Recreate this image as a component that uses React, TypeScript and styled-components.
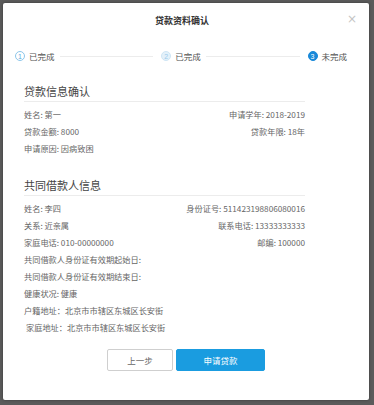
import React from "react";
import styled, { createGlobalStyle } from "styled-components";

const GlobalStyle = createGlobalStyle`
  html, body {
    margin: 0;
    padding: 0;
    background: #5b5b5b;
  }
  body {
    width: 374px;
    height: 405px;
    overflow: hidden;
    font-family: "Noto Sans CJK SC", "Liberation Sans", sans-serif;
  }
`;

type Row = { left: string; right?: string; indent?: boolean };

const loanRows: Row[] = [
  { left: "姓名: 第一", right: "申请学年: 2018-2019" },
  { left: "贷款金额: 8000", right: "贷款年限: 18年" },
  { left: "申请原因: 因病致困" },
];

const coRows: Row[] = [
  { left: "姓名: 李四", right: "身份证号: 511423198806080016" },
  { left: "关系: 近亲属", right: "联系电话: 13333333333" },
  { left: "家庭电话: 010-00000000", right: "邮编: 100000" },
  { left: "共同借款人身份证有效期起始日:" },
  { left: "共同借款人身份证有效期结束日:" },
  { left: "健康状况: 健康" },
  { left: "户籍地址：北京市市辖区东城区长安街" },
  { left: "家庭地址：北京市市辖区东城区长安街", indent: true },
];

const steps = [
  { n: 1, label: "已完成", state: "done" },
  { n: 2, label: "已完成", state: "light" },
  { n: 3, label: "未完成", state: "active" },
] as const;

const App: React.FC = () => {
  return (
    <>
      <GlobalStyle />
      <Modal>
        <Header>
          <Title>贷款资料确认</Title>
          <Close>×</Close>
        </Header>

        <Steps>
          {steps.map((s, i) => (
            <React.Fragment key={s.n}>
              <Step>
                <Dot state={s.state}>{s.n}</Dot>
                <StepLabel>{s.label}</StepLabel>
              </Step>
              {i < steps.length - 1 && <StepLine />}
            </React.Fragment>
          ))}
        </Steps>

        <Section>
          <SectionTitle>贷款信息确认</SectionTitle>
          {loanRows.map((r) => (
            <InfoRow key={r.left}>
              <span>{r.left}</span>
              {r.right && <span>{r.right}</span>}
            </InfoRow>
          ))}
        </Section>

        <Section>
          <SectionTitle>共同借款人信息</SectionTitle>
          {coRows.map((r) => (
            <InfoRow key={r.left} indent={r.indent}>
              <span>{r.left}</span>
              {r.right && <span>{r.right}</span>}
            </InfoRow>
          ))}
        </Section>

        <Footer>
          <Button>上一步</Button>
          <Button primary>申请贷款</Button>
        </Footer>
      </Modal>
    </>
  );
};

const Modal = styled.div`
  margin: 3px 0 0 3px;
  width: 366px;
  height: 397px;
  box-sizing: border-box;
  background: #fff;
  border-radius: 2px;
  box-shadow: 0 0 3px rgba(0, 0, 0, 0.4);
  display: flex;
  flex-direction: column;
`;

const Header = styled.div`
  position: relative;
  height: 34px;
  display: flex;
  align-items: center;
  justify-content: center;
`;

const Title = styled.div`
  font-size: 9px;
  font-weight: 600;
  color: #333;
  margin-right: 8px;
`;

const Close = styled.span`
  position: absolute;
  right: 12px;
  top: 9px;
  font-size: 12px;
  line-height: 14px;
  color: #c4c4c4;
  font-family: "DejaVu Sans", sans-serif;
`;

const Steps = styled.div`
  margin: 10px 22px 0 12px;
  height: 18px;
  display: flex;
  align-items: center;
`;

const Step = styled.div`
  display: flex;
  align-items: center;
  gap: 4px;
`;

const Dot = styled.span<{ state: "done" | "light" | "active" }>`
  width: 10px;
  height: 10px;
  border-radius: 50%;
  box-sizing: border-box;
  display: flex;
  align-items: center;
  justify-content: center;
  font-family: "Liberation Sans", sans-serif;
  font-size: 7px;
  line-height: 1;
  border: 1px solid
    ${(p) => (p.state === "done" ? "#8cc6ea" : p.state === "light" ? "#cfe6f5" : "#1989d9")};
  background: ${(p) => (p.state === "done" ? "#fff" : p.state === "light" ? "#e3f1fa" : "#1989d9")};
  color: ${(p) => (p.state === "done" ? "#5aa9dd" : p.state === "light" ? "#9ccbeb" : "#fff")};
`;

const StepLabel = styled.span`
  font-size: 8.5px;
  color: #555;
`;

const StepLine = styled.div`
  flex: 1;
  height: 1px;
  background: #ececec;
  margin: 0 8px 0 5px;
`;

const Section = styled.div`
  width: 281px;
  margin: 18px 0 0 21px;
  & + & {
    margin-top: 20px;
  }
`;

const SectionTitle = styled.div`
  font-size: 11px;
  line-height: 16px;
  color: #444;
  padding-bottom: 2px;
  border-bottom: 1px solid #ececec;
  margin-bottom: 4px;
`;

const InfoRow = styled.div<{ indent?: boolean }>`
  display: flex;
  justify-content: space-between;
  font-size: 8.2px;
  line-height: 17px;
  color: #666;
  padding-left: ${(p) => (p.indent ? "2px" : "0")};
`;

const Footer = styled.div`
  margin-top: 13px;
  display: flex;
  justify-content: center;
  gap: 3px;
`;

const Button = styled.button<{ primary?: boolean }>`
  height: 22px;
  width: ${(p) => (p.primary ? "89px" : "66px")};
  box-sizing: border-box;
  border-radius: 2px;
  font-family: "Noto Sans CJK SC", sans-serif;
  font-size: 8.5px;
  padding: 0;
  border: 1px solid ${(p) => (p.primary ? "#1a9ce0" : "#cfcfcf")};
  background: ${(p) => (p.primary ? "#1a9ce0" : "#fff")};
  color: ${(p) => (p.primary ? "#fff" : "#666")};
`;

export default App;
